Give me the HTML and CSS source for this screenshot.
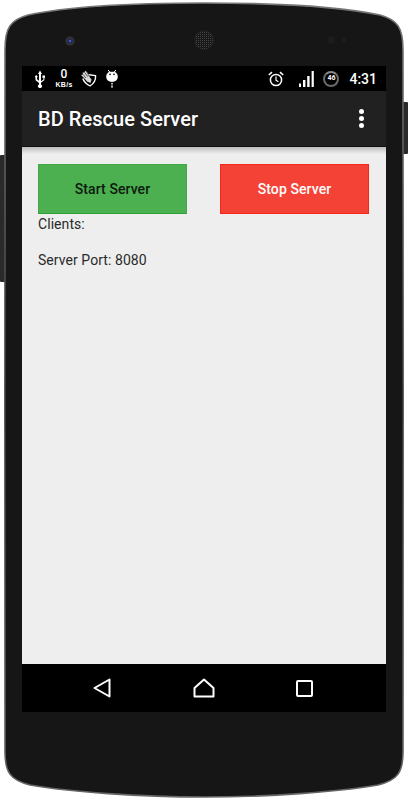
FILE: index.html
```html
<!DOCTYPE html>
<html lang="en">
<head>
<meta charset="utf-8">
<title>BD Rescue Server</title>
<link rel="stylesheet" href="styles.css">
</head>
<body>
<div class="phone">
  <svg class="shell" width="408" height="800" viewBox="0 0 408 800">
    <defs>
      <radialGradient id="lens" cx="50%" cy="50%" r="50%">
        <stop offset="0" stop-color="#6f86e8"/><stop offset="0.5" stop-color="#1d2a78"/><stop offset="1" stop-color="#2a2a30"/>
      </radialGradient>
      <radialGradient id="speaker" cx="50%" cy="50%" r="50%">
        <stop offset="0" stop-color="#3c3c3c"/><stop offset="0.8" stop-color="#333"/><stop offset="1" stop-color="#1c1c1c"/>
      </radialGradient>
      <pattern id="mesh" width="2" height="2" patternUnits="userSpaceOnUse">
        <rect width="2" height="2" fill="#181818"/><rect width="1" height="1" fill="#454545"/>
      </pattern>
      <linearGradient id="edge" x1="0" y1="0" x2="0" y2="1">
        <stop offset="0" stop-color="#777"/><stop offset="0.5" stop-color="#3a3a3a"/><stop offset="1" stop-color="#666"/>
      </linearGradient>
    </defs>
    <rect class="side" x="0" y="155" width="6" height="127" rx="1"/>
    <rect class="side" x="402" y="102" width="6" height="52" rx="1"/>
    <path class="body" d="M5 50C5 28 10 20 28 15C70 6 140 3 204 3C268 3 338 6 380 15C398 20 403 28 403 50V752C403 772 398 780 378 785C338 792 268 797 204 797C140 797 70 792 30 785C10 780 5 772 5 752Z"/>
    <circle cx="70" cy="41" r="4.6" fill="#333"/>
    <circle cx="70" cy="41" r="3" fill="url(#lens)"/>
    <circle cx="204" cy="40" r="10" fill="url(#speaker)"/>
    <circle cx="204" cy="40" r="9" fill="url(#mesh)"/>
    <circle cx="331" cy="40" r="4" fill="#1c1c1c"/>
    <circle cx="344" cy="40" r="2.5" fill="#1c1c1c"/>
  </svg>

  <div class="screen">
    <div class="status">
      <div class="status-left">
        <svg class="ico-usb" width="12" height="18" viewBox="0 0 12 18">
          <path d="M6 0.5L8 4H7V12.2C7 14 7 14 7 14.4A2 2 0 1 1 5 14.4V13L2.2 10.8C1.6 10.3 1.5 10 1.5 9.4V7.6A1.2 1.2 0 1 1 3 7.6V9.2L5 10.8V4H4Z" fill="#fff"/>
          <path d="M7 11.2L9.4 9.4V7.8H8.4V5.4H11V7.8H10.4V9.8C10.4 10.2 10.2 10.4 9.9 10.6L7 12.8Z" fill="#fff"/>
        </svg>
        <div class="speed"><span class="speed-num">0</span><span class="speed-unit">KB/s</span></div>
        <svg class="ico-hand" width="17" height="17" viewBox="0 0 17 17">
          <path d="M7 4.5L15.6 5.6C15.8 10 14 13.6 10 15.8C6.6 14.4 4 12 2.8 8.5" fill="none" stroke="#fff" stroke-width="1.4" stroke-linejoin="round"/>
          <path d="M1 5L3 4.4L2.6 2.4L4.6 2.6L5 0.8L7 2L8.6 4.2L9.6 7L11.6 9.8L10.4 13L7 11.4L4.2 8.2Z" fill="#d8d8d8"/>
          <path d="M3 4.4L6 8M4.8 2.6L7.6 6.6M7 2L9 6" stroke="#222" stroke-width="0.7"/>
        </svg>
        <svg class="ico-droid" width="12" height="19" viewBox="0 0 12 19">
          <path d="M2.2 1L3.8 3.2M9.8 1L8.2 3.2" stroke="#fff" stroke-width="1"/>
          <path d="M3.5 2.8H8.5C10.6 3.6 11.8 5.5 11.8 7.8C11.8 10.8 9.4 13 6 13C2.6 13 0.2 10.8 0.2 7.8C0.2 5.5 1.4 3.6 3.5 2.8Z" fill="#fff"/>
          <circle cx="4" cy="5.4" r="0.8" fill="#000"/>
          <circle cx="8" cy="5.4" r="0.8" fill="#000"/>
          <rect x="5.2" y="14" width="1.6" height="1.4" fill="#fff"/>
          <rect x="5.2" y="16.4" width="1.6" height="2.2" fill="#ddd"/>
        </svg>
      </div>
      <div class="status-right">
        <svg class="ico-alarm" width="16" height="16" viewBox="0 0 16 16">
          <circle cx="8" cy="9" r="5.6" fill="none" stroke="#fff" stroke-width="1.5"/>
          <path d="M8 5.6V9.2L10.4 10.8" fill="none" stroke="#fff" stroke-width="1.2"/>
          <path d="M0.8 4L4 1.2M15.2 4L12 1.2" stroke="#fff" stroke-width="1.6"/>
        </svg>
        <svg class="ico-signal" width="15" height="16" viewBox="0 0 15 16">
          <rect x="0" y="12.5" width="2" height="3.5" fill="#fff"/>
          <rect x="4" y="9" width="2.4" height="7" fill="#fff"/>
          <rect x="8.2" y="5" width="2.4" height="11" fill="#fff"/>
          <rect x="12.6" y="0" width="2.2" height="16" fill="#fff"/>
        </svg>
        <div class="battery"><span>46</span></div>
        <span class="clock">4:31</span>
      </div>
    </div>
    <header class="appbar">
      <h1 class="title">BD Rescue Server</h1>
      <div class="overflow"><i></i><i></i><i></i></div>
    </header>
    <main class="content">
      <div class="buttons">
        <button class="btn btn-start">Start Server</button>
        <button class="btn btn-stop">Stop Server</button>
      </div>
      <p class="line">Clients:</p>
      <p class="line line-port">Server Port: 8080</p>
    </main>
    <nav class="navbar">
      <svg width="18" height="20" viewBox="0 0 18 20"><path d="M16.5 1.5V18.5L1.5 10Z" fill="none" stroke="#fff" stroke-width="2" stroke-linejoin="round"/></svg>
      <svg width="22" height="20" viewBox="0 0 22 20"><path d="M11 1.5L20.5 10V18.5H1.5V10Z" fill="none" stroke="#fff" stroke-width="2" stroke-linejoin="round"/></svg>
      <svg width="17" height="17" viewBox="0 0 17 17"><rect x="1" y="1" width="15" height="15" rx="1" fill="none" stroke="#fff" stroke-width="2"/></svg>
    </nav>
  </div>
</div>
</body>
</html>
```

FILE: styles.css
```css
* { box-sizing: border-box; }
html, body { margin: 0; padding: 0; background: #fff; }
body { font-family: Roboto, "Liberation Sans", sans-serif; overflow: hidden; }
.phone { position: relative; width: 408px; height: 800px; padding: 66px 22px 88px; }
.shell { position: absolute; left: 0; top: 0; }
.side { fill: #2a2a2a; }
.body { fill: #161616; stroke: url(#edge); stroke-width: 1.6; }
.screen { position: relative; display: flex; flex-direction: column; height: 646px; background: #000; }
.status { display: flex; justify-content: space-between; align-items: center; height: 25px; padding: 0 9px 0 12px; background: #000; color: #fff; flex: none; }
.status-left, .status-right { display: flex; align-items: center; }
.speed { display: flex; flex-direction: column; align-items: center; width: 18px; margin: -1px 0 0 9px; }
.speed-num { font-size: 12px; font-weight: 500; line-height: 14px; }
.speed-unit { margin-top: 0.2px; font-size: 7px; font-weight: 700; line-height: 8px; letter-spacing: 0.3px; font-family: "Liberation Sans", sans-serif; }
.ico-hand { margin-left: 7px; }
.ico-droid { margin-left: 9px; }
.ico-signal { margin-left: 15px; }
.battery { display: flex; align-items: center; justify-content: center; width: 16px; height: 16px; margin-left: 9px; border-radius: 50%; border: 2.5px solid #6a6a6a; border-top-color: #8a8a8a; }
.battery span { font-size: 7px; font-weight: 700; line-height: 1; }
.clock { margin-left: 10px; font-size: 14px; font-weight: 500; }
.appbar { display: flex; justify-content: space-between; align-items: center; height: 56px; padding: 0 22px 0 16px; background: #212121; border-bottom: 1px solid #111; flex: none; }
.title { margin: 0; color: #fff; font-size: 20px; font-weight: 500; letter-spacing: 0.06px; }
.overflow { display: flex; flex-direction: column; gap: 2px; }
.overflow i { display: block; width: 5px; height: 5px; border-radius: 50%; background: #fff; }
.content { flex: 1; padding: 17px 17px 0 16px; background: linear-gradient(#bdbdbd, #eeeeee 7px); color: #2a2a2a; font-size: 14px; letter-spacing: 0.06px; }
.buttons { display: flex; justify-content: space-between; }
.btn { width: 149px; height: 50px; padding: 0; border: 1px solid; border-radius: 0; font: 500 14px Roboto, sans-serif; letter-spacing: 0.08px; }
.btn-start { background: #4caf50; border-color: #43a847; border-bottom-color: #2ba335; color: #0d1a0d; }
.btn-stop { background: #f44336; border-color: #f5261a; color: #fff; }
.line { margin: 0; line-height: 20px; }
.line-port { margin-top: 16px; }
.navbar { display: flex; justify-content: space-between; align-items: center; height: 48px; padding: 0 73px 0 71px; background: #000; flex: none; }
```
